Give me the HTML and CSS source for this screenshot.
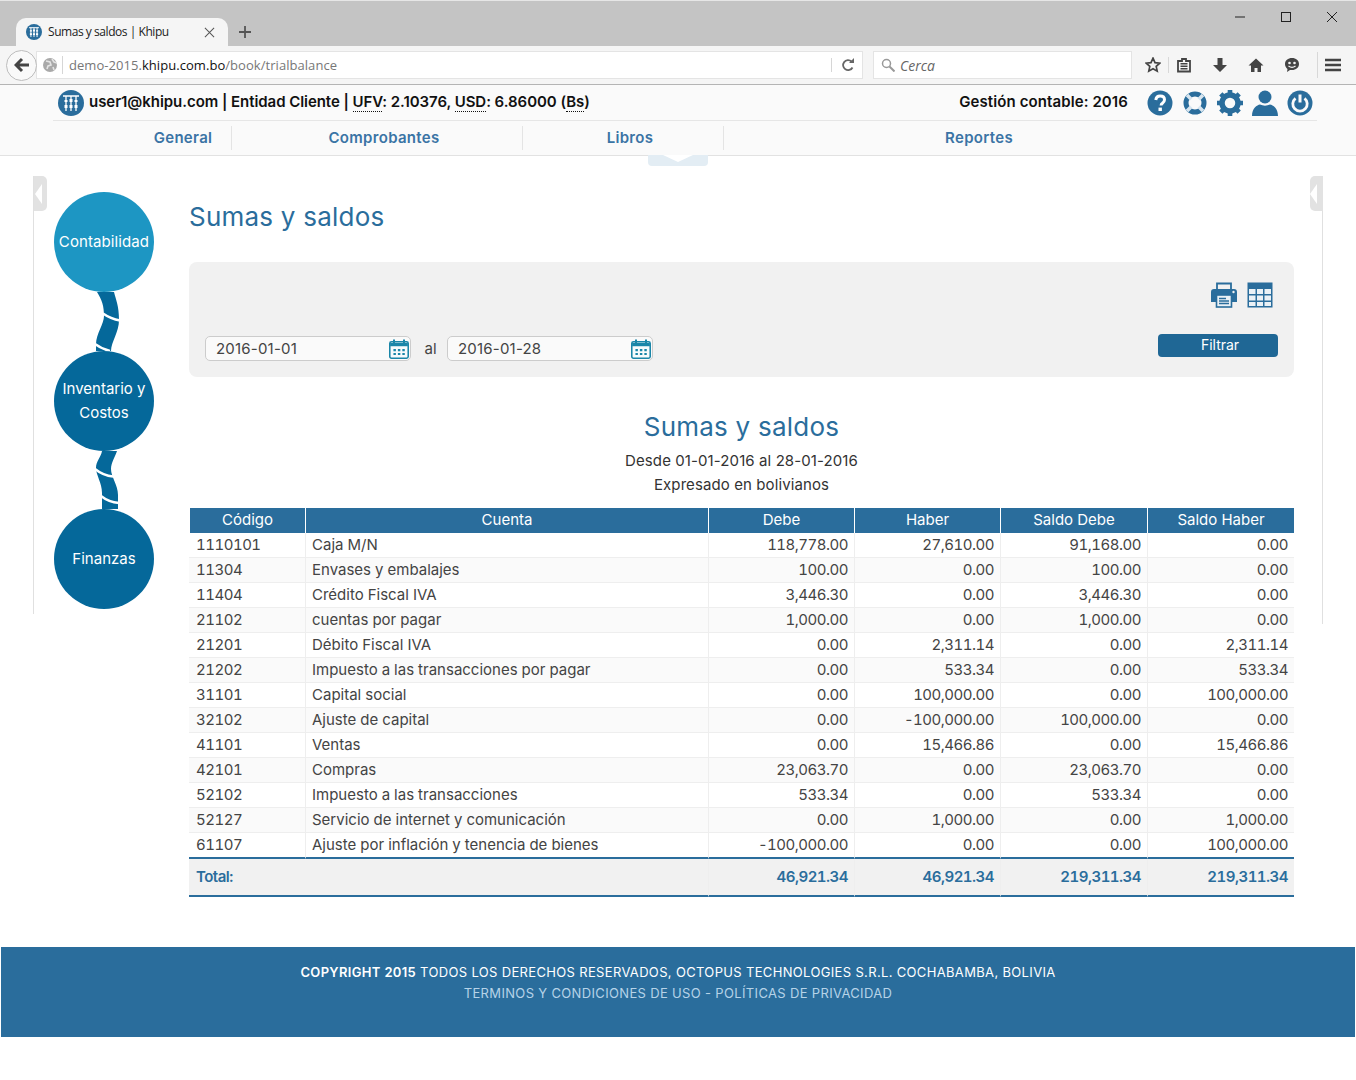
FILE: index.html
```html
<!DOCTYPE html>
<html lang="es">
<head>
<meta charset="utf-8">
<title>Sumas y saldos | Khipu</title>
<link rel="stylesheet" href="styles.css">
</head>
<body>
<div class="chrome">
  <div class="titlebar">
    <div class="tab">
      <svg class="favicon" viewBox="0 0 26 26"><circle cx="13" cy="13" r="13" fill="#2a6d9c"/><path d="M5 6h16M8 6v15M13 6v15M18 6v15" stroke="#fff" stroke-width="1.6" fill="none"/><path d="M8 10v2M13 9v3M18 10v2M8 15v3M13 15v3M18 15v3" stroke="#fff" stroke-width="3.4" fill="none"/></svg>
      <span class="tab-title">Sumas y saldos | Khipu</span>
      <svg class="tab-close" viewBox="0 0 12 12"><path d="M1 1l10 10M11 1L1 11" stroke="#555" stroke-width="1.1"/></svg>
    </div>
    <svg class="tab-new" viewBox="0 0 12 12"><path d="M6 0v12M0 6h12" stroke="#555" stroke-width="1.8"/></svg>
    <div class="win-controls">
      <svg viewBox="0 0 12 12"><path d="M1 6h10" stroke="#222" stroke-width="1"/></svg>
      <svg viewBox="0 0 12 12"><rect x="1.5" y="1.5" width="9" height="9" fill="none" stroke="#222" stroke-width="1"/></svg>
      <svg viewBox="0 0 12 12"><path d="M1 1l10 10M11 1L1 11" stroke="#222" stroke-width="1"/></svg>
    </div>
  </div>
  <div class="toolbar">
    <div class="back"><svg viewBox="0 0 16 16"><path d="M8 2L2 8l6 6M2.5 8H15" fill="none" stroke="#444" stroke-width="3"/></svg></div>
    <div class="urlbar">
      <svg class="globe" viewBox="0 0 14 14"><circle cx="7" cy="7" r="7" fill="#a9a9a9"/><path d="M3 3l4 1 1 3-3 1-1 3M9 1l2 3 3 1M10 9l1 3" stroke="#e4e4e4" stroke-width="1.6" fill="none"/></svg>
      <span class="url"><span class="url-dim">demo-2015.</span>khipu.com.bo<span class="url-dim">/book/trialbalance</span></span>
      <svg class="reload" viewBox="0 0 14 14"><path d="M11.5 9.5A5 5 0 1 1 10.5 3.5" fill="none" stroke="#666" stroke-width="1.8"/><path d="M8 5h5V0z" fill="#666"/></svg>
    </div>
    <div class="searchbar">
      <svg class="lens" viewBox="0 0 14 14"><circle cx="5.5" cy="5.5" r="4" fill="none" stroke="#999" stroke-width="1.5"/><path d="M8.5 8.5l5 5" stroke="#999" stroke-width="2"/></svg>
      <span class="search-text">Cerca</span>
    </div>
    <div class="tools">
      <svg class="tool" viewBox="0 0 16 16"><path d="M8 1.2l2 4.5 4.8.5-3.6 3.2 1 4.8L8 11.8l-4.2 2.4 1-4.8L1.2 6.2 6 5.700z" fill="none" stroke="#444" stroke-width="1.7"/></svg>
      <span class="tool-sep"></span>
      <svg class="tool" viewBox="0 0 16 16"><path d="M2 4h4V2h4v2h4v10.500H2z" fill="none" stroke="#444" stroke-width="1.8"/><path d="M4.500 6.800h7M4.500 9.300h7M4.500 11.800h7" stroke="#444" stroke-width="1.500"/></svg>
      <svg class="tool" viewBox="0 0 16 16"><path d="M5.500 1h5v7H15l-7 7-7-7h4.500z" fill="#444"/></svg>
      <svg class="tool" viewBox="0 0 16 16"><path d="M8 1.500L0.500 8.500H3V15h3.500v-4h3v4H13V8.500h2.500z" fill="#444"/></svg>
      <svg class="tool" viewBox="0 0 16 16"><path d="M8 1c4 0 7 2.500 7 6s-3 6-7 6H6l-3 2 .5-3C2 10.800 1 9 1 7c0-3.500 3-6 7-6z" fill="#444"/><circle cx="5.500" cy="6" r="1.300" fill="#f5f5f5"/><circle cx="10.500" cy="6" r="1.300" fill="#f5f5f5"/><path d="M4.500 9c2 1.500 5 1.500 7 0" stroke="#f5f5f5" stroke-width="1.200" fill="none"/></svg>
      <span class="tool-sep tool-sep-wide"></span>
      <svg class="tool" viewBox="0 0 16 16"><path d="M0 3h16M0 8h16M0 13h16" stroke="#444" stroke-width="2.600"/></svg>
    </div>
  </div>
</div>

<header class="app-header">
  <div class="userbar">
    <div class="user-info">
      <svg class="logo" viewBox="0 0 26 26"><circle cx="13" cy="13" r="13" fill="#2a6d9c"/><path d="M5 6h16M8 6v15M13 6v15M18 6v15" stroke="#fff" stroke-width="1.300" fill="none"/><path d="M8 10v2M13 9v3M18 10v2M8 15v3M13 15v3M18 15v3" stroke="#fff" stroke-width="3" fill="none"/></svg>
      <span class="user-text">user1@khipu.com | Entidad Cliente | <abbr>UFV</abbr>: 2.10376, <abbr>USD</abbr>: 6.86000 (<abbr>Bs</abbr>)</span>
    </div>
    <div class="user-actions">
      <span class="gestion">Gestión contable: 2016</span>
      <svg class="action" viewBox="0 0 26 26"><circle cx="13" cy="13" r="12.500" fill="#2a6d9c"/><path d="M8.800 10c.3-2.600 2-4 4.400-4 2.600 0 4.300 1.500 4.300 3.700 0 1.700-.9 2.600-2.100 3.500-1 .7-1.300 1.200-1.300 2.400" fill="none" stroke="#fff" stroke-width="3"/><rect x="11.500" y="17.600" width="3.400" height="3.400" fill="#fff"/></svg>
      <svg class="action" viewBox="0 0 26 26"><circle cx="13" cy="13" r="9" fill="none" stroke="#2a6d9c" stroke-width="5"/><path d="M5 5l4.200 4.200M21 5l-4.200 4.200M5 21l4.200-4.200M21 21l-4.200-4.200" stroke="#d7e5ef" stroke-width="3.600"/></svg>
      <svg class="action" viewBox="0 0 26 26"><circle cx="13" cy="13" r="8" fill="none" stroke="#2a6d9c" stroke-width="5.500"/><path d="M13 0v5M13 21v5M0 13h5M21 13h5M3.800 3.800l3.500 3.500M18.700 18.700l3.500 3.500M22.200 3.800l-3.500 3.500M7.300 18.700l-3.500 3.500" stroke="#2a6d9c" stroke-width="4.600"/></svg>
      <svg class="action" viewBox="0 0 26 26"><circle cx="13" cy="7" r="6.500" fill="#2a6d9c"/><path d="M0 26c0-8 5-11 8-11.500 3 1.500 7 1.500 10 0 3 .5 8 3.500 8 11.500z" fill="#2a6d9c"/></svg>
      <svg class="action" viewBox="0 0 26 26"><circle cx="13" cy="13" r="12.500" fill="#2a6d9c"/><path d="M8.500 8.300a7.200 7.200 0 1 0 9 0" fill="none" stroke="#fafafa" stroke-width="2.800"/><path d="M13 4.500v8" stroke="#fafafa" stroke-width="3"/></svg>
    </div>
  </div>
  <nav class="mainnav">
    <a class="nav-item nav-general">General</a>
    <a class="nav-item nav-comp">Comprobantes</a>
    <a class="nav-item nav-libros">Libros</a>
    <a class="nav-item nav-rep">Reportes</a>
  </nav>
  <span class="pull-tab"></span>
</header>

<main class="page">
  <aside class="side">
    <span class="side-toggle"></span>
    <a class="bubble bubble-active">Contabilidad</a>
    <svg class="link" viewBox="0 0 40 59"><path d="M13 0C18 8 20 14 20 24C20 32 12 42 12 52L12 59L27 59C27 50 35 40 35 28C35 14 32 8 30 0Z" fill="#05689a"/><path d="M19 21.500C24 25 30 27.500 36 28.500" fill="none" stroke="#fff" stroke-width="2.400"/><path d="M11 52C15 55 20 57.500 26 59" fill="none" stroke="#fff" stroke-width="2.400"/></svg>
    <a class="bubble">Inventario y Costos</a>
    <svg class="link link-2" viewBox="0 0 40 58"><path d="M18 0C17 6 12 10 12 17C12 24 18 32 18 42L18 58L34 58L34 44C34 34 27 26 27 18C27 12 31 6 33 0Z" fill="#05689a"/><path d="M11 18C16 22 23 25 29 25.500" fill="none" stroke="#fff" stroke-width="2.400"/><path d="M17 45C22 49 29 51.500 35 52" fill="none" stroke="#fff" stroke-width="2.400"/></svg>
    <a class="bubble">Finanzas</a>
  </aside>
  <section class="content">
    <h1 class="page-title">Sumas y saldos</h1>
    <div class="filters">
      <div class="export">
        <svg class="export-icon" viewBox="0 0 26 26"><path d="M6 8V1.500h14V8" fill="none" stroke="#2a6d9c" stroke-width="1.800"/><path d="M3 7h20a3 3 0 0 1 3 3v10h-5v-5H5v5H0V10a3 3 0 0 1 3-3z" fill="#2a6d9c"/><rect x="5.500" y="13" width="15" height="12" fill="#eaf1f6" stroke="#2a6d9c" stroke-width="1.600"/><path d="M8 16.500h7M8 19h10M8 21.500h10" stroke="#2a6d9c" stroke-width="1.400"/><circle cx="22.500" cy="10" r="1.200" fill="#f1f1f1"/></svg>
        <svg class="export-icon" viewBox="0 0 26 26"><rect x="0.500" y="0.500" width="25" height="25" fill="#2a6d9c"/><path d="M2 7h6.500v5H2zM10 7h6v5h-6zM17.500 7H24v5h-6.500zM2 13.500h6.500v5H2zM10 13.500h6v5h-6zM17.500 13.500H24v5h-6.500zM2 20h6.500v4H2zM10 20h6v4h-6zM17.500 20H24v4h-6.500z" fill="#eaf1f6"/></svg>
      </div>
      <div class="filter-row">
        <div class="date-input"><span>2016-01-01</span>
          <svg class="cal" viewBox="0 0 18 18"><rect x="0.700" y="2.500" width="16.600" height="14.800" rx="1.500" fill="#f7fbfc" stroke="#1a86a8" stroke-width="1.400"/><path d="M1 3.500h16v3H1z" fill="#1a86a8"/><path d="M4.500 0.500v3M13.500 0.500v3" stroke="#1a86a8" stroke-width="1.800"/><path d="M4 9h2.200v2H4zM8 9h2.200v2H8zM12 9h2.200v2H12zM4 12.500h2.200v2H4zM8 12.500h2.200v2H8zM12 12.500h2.200v2H12z" fill="#1a86a8"/></svg>
        </div>
        <span class="al">al</span>
        <div class="date-input"><span>2016-01-28</span>
          <svg class="cal" viewBox="0 0 18 18"><rect x="0.700" y="2.500" width="16.600" height="14.800" rx="1.500" fill="#f7fbfc" stroke="#1a86a8" stroke-width="1.400"/><path d="M1 3.500h16v3H1z" fill="#1a86a8"/><path d="M4.500 0.500v3M13.500 0.500v3" stroke="#1a86a8" stroke-width="1.800"/><path d="M4 9h2.200v2H4zM8 9h2.200v2H8zM12 9h2.200v2H12zM4 12.500h2.200v2H4zM8 12.500h2.200v2H8zM12 12.500h2.200v2H12z" fill="#1a86a8"/></svg>
        </div>
        <button class="btn-filter">Filtrar</button>
      </div>
    </div>
    <div class="report-head">
      <h2 class="report-title">Sumas y saldos</h2>
      <p class="report-sub">Desde 01-01-2016 al 28-01-2016</p>
      <p class="report-sub">Expresado en bolivianos</p>
    </div>
    <table class="balance">
      <colgroup><col class="c1"><col class="c2"><col class="c3"><col class="c4"><col class="c5"><col class="c6"></colgroup>
      <thead><tr><th>Código</th><th>Cuenta</th><th>Debe</th><th>Haber</th><th>Saldo Debe</th><th>Saldo Haber</th></tr></thead>
      <tbody>
        <tr><td>1110101</td><td>Caja M/N</td><td>118,778.00</td><td>27,610.00</td><td>91,168.00</td><td>0.00</td></tr>
        <tr><td>11304</td><td>Envases y embalajes</td><td>100.00</td><td>0.00</td><td>100.00</td><td>0.00</td></tr>
        <tr><td>11404</td><td>Crédito Fiscal IVA</td><td>3,446.30</td><td>0.00</td><td>3,446.30</td><td>0.00</td></tr>
        <tr><td>21102</td><td>cuentas por pagar</td><td>1,000.00</td><td>0.00</td><td>1,000.00</td><td>0.00</td></tr>
        <tr><td>21201</td><td>Débito Fiscal IVA</td><td>0.00</td><td>2,311.14</td><td>0.00</td><td>2,311.14</td></tr>
        <tr><td>21202</td><td>Impuesto a las transacciones por pagar</td><td>0.00</td><td>533.34</td><td>0.00</td><td>533.34</td></tr>
        <tr><td>31101</td><td>Capital social</td><td>0.00</td><td>100,000.00</td><td>0.00</td><td>100,000.00</td></tr>
        <tr><td>32102</td><td>Ajuste de capital</td><td>0.00</td><td>-100,000.00</td><td>100,000.00</td><td>0.00</td></tr>
        <tr><td>41101</td><td>Ventas</td><td>0.00</td><td>15,466.86</td><td>0.00</td><td>15,466.86</td></tr>
        <tr><td>42101</td><td>Compras</td><td>23,063.70</td><td>0.00</td><td>23,063.70</td><td>0.00</td></tr>
        <tr><td>52102</td><td>Impuesto a las transacciones</td><td>533.34</td><td>0.00</td><td>533.34</td><td>0.00</td></tr>
        <tr><td>52127</td><td>Servicio de internet y comunicación</td><td>0.00</td><td>1,000.00</td><td>0.00</td><td>1,000.00</td></tr>
        <tr><td>61107</td><td>Ajuste por inflación y tenencia de bienes</td><td>-100,000.00</td><td>0.00</td><td>0.00</td><td>100,000.00</td></tr>
      </tbody>
      <tfoot><tr><td colspan="2">Total:</td><td>46,921.34</td><td>46,921.34</td><td>219,311.34</td><td>219,311.34</td></tr></tfoot>
    </table>
  </section>
  <span class="side-toggle side-toggle-right"></span>
</main>

<footer class="footer">
  <p><strong>COPYRIGHT 2015</strong> TODOS LOS DERECHOS RESERVADOS, OCTOPUS TECHNOLOGIES S.R.L. COCHABAMBA, BOLIVIA</p>
  <p class="footer-links">TERMINOS Y CONDICIONES DE USO - POLÍTICAS DE PRIVACIDAD</p>
</footer>
</body>
</html>
```
FILE: styles.css
```css
* { box-sizing: border-box; }
html, body { margin: 0; padding: 0; }
body { background: #fff; font-family: Inter, Lato, sans-serif; color: #333; font-size: 15px; }

/* browser chrome */
.chrome { font-family: "Open Sans", sans-serif; }
.titlebar { height: 46px; background: #c4c4c4; display: flex; align-items: flex-end; padding-left: 16px; position: relative; border-top: 1px solid #e6e6e6; }
.tab { width: 212px; height: 28px; background: #f5f5f5; border-radius: 10px 10px 0 0; display: flex; align-items: center; padding: 0 6px 0 10px; margin-top: 18px; }
.favicon { width: 16px; height: 16px; flex: none; }
.tab-title { font-size: 12px; color: #222; margin-left: 6px; flex: 1; white-space: nowrap; letter-spacing: -0.45px; position: relative; top: -1px; }
.tab-close { width: 11px; height: 11px; margin-right: 7px; }
.tab-new { width: 12px; height: 12px; margin: 0 0 8px 11px; }
.win-controls { position: absolute; top: 10px; right: 18px; display: flex; gap: 34px; }
.win-controls svg { width: 12px; height: 12px; }
.toolbar { height: 39px; background: #f5f5f5; border-bottom: 1px solid #b4b4b4; display: flex; align-items: center; padding: 0 11px 0 6px; }
.back { width: 31px; height: 31px; border-radius: 50%; border: 1px solid #bdbdbd; background: #f9f9f9; display: flex; align-items: center; justify-content: center; flex: none; margin-right: -1px; position: relative; z-index: 1; }
.back svg { width: 16px; height: 16px; }
.urlbar { width: 827px; height: 28px; background: #fff; border: 1px solid #e4e4e4; display: flex; align-items: center; padding-left: 6px; }
.globe { width: 14px; height: 14px; margin-right: 5px; }
.url { flex: 1; font-size: 13px; color: #111; border-left: 1px solid #d6d6d6; padding-left: 6px; line-height: 18px; white-space: nowrap; letter-spacing: 0.05px; }
.url-dim { color: #777; }
.reload { width: 14px; height: 14px; margin-right: 7px; padding: 0; box-sizing: content-box; padding-left: 9px; border-left: 1px solid #d6d6d6; }
.searchbar { width: 259px; height: 28px; margin-left: 10px; background: #fff; border: 1px solid #e4e4e4; display: flex; align-items: center; padding-left: 7px; }
.lens { width: 14px; height: 14px; margin-right: 5px; }
.search-text { font-size: 14px; font-style: italic; color: #666; }
.tools { display: flex; align-items: center; margin-left: 13px; }
.tool { width: 16px; height: 16px; margin-right: 20px; }
.tool:first-child { margin-right: 7px; }
.tool:last-child { margin-right: 0; }
.tool-sep { width: 1px; height: 16px; background: #d8d8d8; margin-right: 7px; }
.tool-sep-wide { height: 26px; margin-right: 7px; margin-left: -3px; }

/* app header */
.app-header { height: 71px; background: #fafafa; border-bottom: 1px solid #e2e2e2; position: relative; }
.userbar { height: 36px; margin: 0 39px 0 53px; border-bottom: 1px solid #e6e6e6; display: flex; align-items: center; justify-content: space-between; padding: 0 4px 0 5px; }
.user-info { display: flex; align-items: center; gap: 5px; font-size: 15px; font-weight: 600; color: #111; white-space: nowrap; letter-spacing: -0.05px; }
.user-text { position: relative; top: -1px; }
.logo { width: 26px; height: 26px; }
abbr { text-decoration: none; border-bottom: 1px dotted #111; }
.user-actions { display: flex; align-items: center; gap: 9px; }
.gestion { font-size: 15px; font-weight: 600; color: #111; margin-right: 10px; letter-spacing: 0.1px; position: relative; top: -1px; }
.action { width: 26px; height: 26px; }
.mainnav { display: flex; height: 34px; align-items: center; padding-left: 53px; }
.nav-item { display: flex; align-items: center; justify-content: center; height: 24px; font-size: 15px; font-weight: 600; color: #3a74a5; border-right: 1px solid #e4e4e4; letter-spacing: 0.3px; padding-bottom: 2px; }
.nav-general { width: 179px; padding-left: 82px; }
.nav-comp { width: 291px; padding-left: 14px; }
.nav-libros { width: 201px; padding-left: 14px; }
.nav-rep { width: 510px; border-right: 0; }
.pull-tab { position: absolute; left: 648px; top: 70px; width: 60px; height: 11px; background: #e3edf4; border-radius: 0 0 4px 4px; }
.pull-tab::after { content: ""; position: absolute; left: 15px; top: 0; border-left: 15px solid transparent; border-right: 15px solid transparent; border-top: 7px solid #fff; }

/* page */
.page { display: flex; align-items: flex-start; padding: 20px 33px 0; height: 791px; position: relative; }
.side { width: 156px; flex: none; height: 438px; border-left: 1px solid #e0e0e0; padding: 16px 0 0 20px; position: relative; display: flex; flex-direction: column; }
.side-toggle { position: absolute; left: 0; top: 0; width: 13px; height: 35px; background: #e2e2e2; border-radius: 0 5px 5px 0; }
.side-toggle::after { content: ""; position: absolute; left: 1px; top: 8px; border-top: 10px solid transparent; border-bottom: 10px solid transparent; border-right: 7px solid #fff; }
.side-toggle-right { left: auto; right: 33px; top: 20px; height: 448px; width: 1px; background: #e0e0e0; border-radius: 0; }
.side-toggle-right::before { content: ""; position: absolute; right: 0; top: 0; width: 13px; height: 35px; background: #e2e2e2; border-radius: 5px 0 0 5px; }
.side-toggle-right::after { left: -12px; }
.bubble { width: 100px; height: 100px; border-radius: 50%; background: #05689a; color: #fff; display: flex; align-items: center; justify-content: center; text-align: center; font-size: 15px; line-height: 24px; flex: none; position: relative; z-index: 1; }
.bubble-active { background: #1d96c3; letter-spacing: 0.1px; white-space: nowrap; }
.link { width: 40px; height: 59px; margin-left: 30px; flex: none; display: block; }
.link-2 { height: 58px; }
.content { width: 1105px; flex: none; }
.page-title { font-size: 26px; font-weight: 400; color: #2a6d9c; margin: 23px 0 27px; line-height: 36px; letter-spacing: 0.23px; }
.filters { height: 115px; background: #f1f1f1; border-radius: 8px; padding: 20px 16px 0; }
.export { display: flex; justify-content: flex-end; gap: 10px; padding-right: 5px; height: 52px; }
.export-icon { width: 26px; height: 26px; }
.filter-row { display: flex; align-items: center; height: 25px; position: relative; margin-top: 2px; }
.date-input { width: 206px; height: 25px; background: #fafafa; border: 1px solid #ccc; border-radius: 5px; display: flex; align-items: center; justify-content: space-between; padding: 0 1px 0 10px; font-size: 15px; color: #444; letter-spacing: 0.2px; }
.cal { width: 20px; height: 20px; margin-top: 1px; }
.al { width: 36px; text-align: center; font-size: 15px; color: #444; padding-left: 3px; }
.btn-filter { margin-left: auto; width: 120px; height: 23px; background: #1f6795; color: #fff; border: 0; border-radius: 4px; font: 14px Inter, sans-serif; position: relative; top: -3px; padding: 0 0 2px 4px; }
.report-head { text-align: center; margin-top: 32px; }
.report-title { font-size: 26px; font-weight: 400; color: #2a6d9c; margin: 0 0 4px; line-height: 36px; letter-spacing: 0.23px; }
.report-sub { margin: 0; font-size: 15px; line-height: 24px; color: #333; letter-spacing: 0.1px; }
.balance { width: 1105px; table-layout: fixed; border-collapse: separate; border-spacing: 0; margin-top: 11px; font-size: 15px; color: #444; }
.c1 { width: 116px; } .c2 { width: 403px; } .c3 { width: 146px; } .c4 { width: 146px; } .c5 { width: 147px; } .c6 { width: 147px; }
.balance th { background: #2a6d9c; color: #fff; font-weight: 400; height: 25px; padding: 0 0 2px; border-left: 1px solid #fff; line-height: 20px; }
.balance th:first-child { border-left: 1px solid #fff; }
.balance td { height: 25px; padding: 0 6px 1px; line-height: 20px; border-bottom: 1px solid #eee; border-left: 1px solid #eee; white-space: nowrap; font-variant-numeric: tabular-nums; letter-spacing: -0.5px; }
.balance td:first-child { border-left: 0; padding-left: 7px; }
.balance tbody td:nth-child(2) { letter-spacing: 0; }
.balance tbody td:nth-child(n+3), .balance tfoot td:nth-child(n+2) { text-align: right; }
.balance tbody tr:nth-child(even) td { background: #fafafa; }
.balance tbody tr:last-child td { border-bottom: 2px solid #2a6d9c; height: 26px; }
.balance tfoot td { height: 38px; background: #f1f1f1; color: #2a6d9c; font-weight: 600; border-bottom: 2px solid #2a6d9c; }

/* footer */
.footer { height: 90px; margin: 0 1px; background: #2a6d9c; color: #fff; text-align: center; font-size: 13px; padding-top: 15px; letter-spacing: 0.34px; }
.footer p { margin: 0; line-height: 21px; }
.footer strong { font-weight: 600; }
.footer-links { color: #b6d3e8; }
```
